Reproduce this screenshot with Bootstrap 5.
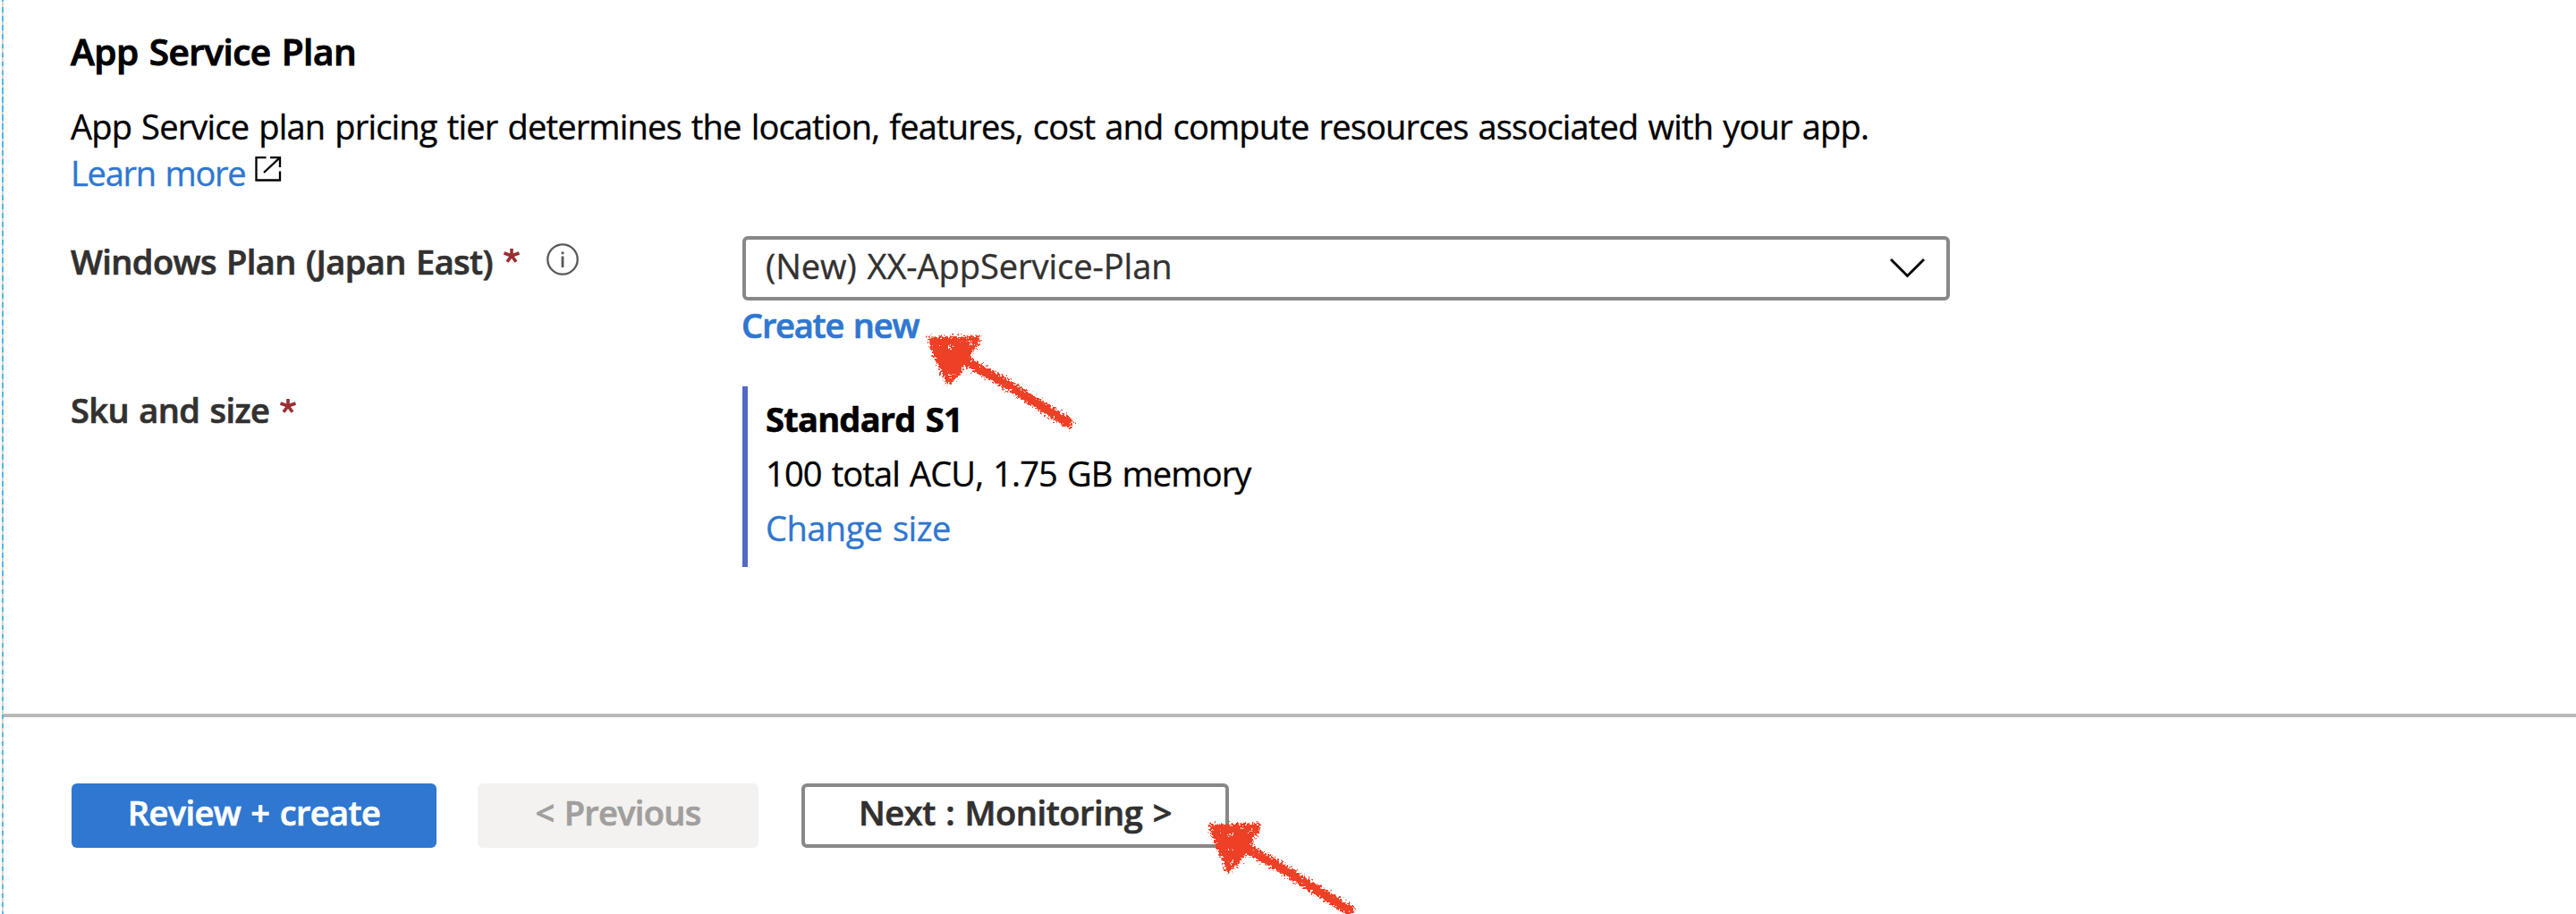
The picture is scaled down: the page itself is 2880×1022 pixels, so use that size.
<!DOCTYPE html>
<html lang="en">
<head>
<meta charset="utf-8">
<title>App Service Plan</title>
<link rel="stylesheet" href="https://cdn.jsdelivr.net/npm/bootstrap@5.3.0/dist/css/bootstrap.min.css">
<style>
body{font-family:"Open Sans","Noto Sans",sans-serif;font-size:38px;line-height:52px;color:#000;background:#fff;width:2880px;height:1022px;overflow:hidden;word-spacing:2px;-webkit-text-stroke:.35px currentColor}
.edge{width:2px;margin-left:2px;background:repeating-linear-gradient(to bottom,#d6d4d2 0 3.5px,#4fb9f0 3.5px 9.5px,#d6d4d2 9.5px 10px);background-position:0 5px}
.plan-body{height:798px;padding:28px 0 0 75px}
.plan-title{font-size:40.5px;line-height:60px;font-weight:600;letter-spacing:-.5px;margin-bottom:27px;-webkit-text-stroke:1px #000}
.plan-desc{letter-spacing:-.82px;margin-bottom:45px}
.lnk{color:#2f77d0;text-decoration:none}
.lnk-more{letter-spacing:-1.25px}
.lnk-new{letter-spacing:-1.2px;padding-top:1px;margin-left:-1px;font-weight:600}
.lbl{width:751px;font-weight:600;color:#323130;letter-spacing:-.6px}
.lbl,.lnk-new,.fbtn{-webkit-text-stroke:.7px currentColor}
.lbl svg,.plan-select svg,.plan-desc svg{flex-shrink:0}
.plan-select{width:1350px;height:72px;border:4px solid #8a8886;border-radius:6px;padding:0 23px 7px 22px;color:#323130;letter-spacing:-.03px}
.plan-fields{height:168px}
.plan-fields .lbl>span{padding-top:2px}
.ic-star{margin:12px 0 0 11px}
.ic-info{margin:7px 0 0 28px}
.ic-open{margin:8px 0 0 11px}
.ic-chev{margin-top:7px}
.sku{height:202px;border-left:6px solid #5269c5;padding:6px 0 0 20px;line-height:61px}
.sku-name{letter-spacing:-.75px;-webkit-text-stroke:.6px #000}
.sku-spec{letter-spacing:-.85px}
.sku-size{letter-spacing:-.5px}
.foot{height:224px;border-top:4px solid #b9b9b9;padding:74px 0 0 76px}
.fbtn{height:72px;border:4px solid transparent;border-radius:6px;font-size:38px;font-weight:600;line-height:56px;padding:0 0 8px;text-align:center;word-spacing:2px}
.b-review{width:408px;background:#2f77d0;color:#fff;letter-spacing:-.6px;margin-right:46px}
.b-prev{width:314px;background:#f3f2f1;color:#a19f9d;letter-spacing:-.7px;margin-right:48px}
.b-next{width:478px;border-color:#8a8886;color:#323130;background:#fff;letter-spacing:-.45px}
.marks{left:0;top:0;pointer-events:none}
</style>
<script src="https://cdn.jsdelivr.net/npm/bootstrap@5.3.0/dist/js/bootstrap.bundle.min.js"></script>
</head>
<body class="position-relative">
<div class="d-flex">
  <div class="edge flex-shrink-0"></div>
  <main class="flex-grow-1">
    <section class="plan-body">
      <h1 class="plan-title">App Service Plan</h1>
      <div class="plan-desc">
        <div>App Service plan pricing tier determines the location, features, cost and compute resources associated with your app.</div>
        <div class="d-flex"><a class="lnk lnk-more" href="#">Learn more</a>
          <svg class="ic-open" width="30" height="28" viewBox="0 0 30 28" fill="none" stroke="#000" stroke-width="2.3"><path d="M12.500 1.200H1.500V26.500H28V16.500M17 1.200H28V12M28 1.200L10 18"/></svg>
        </div>
      </div>
      <div class="d-flex plan-fields">
        <div class="lbl d-flex"><span>Windows Plan (Japan East)</span>
          <svg class="ic-star" width="20" height="20" viewBox="-10 -10 20 20" stroke="#9b2d30" stroke-width="3.600"><path d="M0 0V-8M0 0L-8.500-3M0 0L8.500-3M0 0L-5 6.800M0 0L5 6.800"/></svg>
          <svg class="ic-info" width="38" height="38" viewBox="-19 -19 38 38" fill="none" stroke="#5b5957" stroke-width="2.300"><circle r="16.700"/><path d="M0-3.500V9M0-8.500V-5.800" stroke-width="2.800"/></svg>
        </div>
        <div>
          <div class="plan-select d-flex align-items-center justify-content-between"><span>(New) XX-AppService-Plan</span>
            <svg class="ic-chev" width="40" height="24" viewBox="0 0 40 24" fill="none" stroke="#000" stroke-width="2.900"><path d="M1 2L19.500 20.500L38 2"/></svg>
          </div>
          <a class="lnk lnk-new d-block" href="#">Create new</a>
        </div>
      </div>
      <div class="d-flex">
        <div class="lbl d-flex"><span>Sku and size</span>
          <svg class="ic-star" width="20" height="20" viewBox="-10 -10 20 20" stroke="#9b2d30" stroke-width="3.600"><path d="M0 0V-8M0 0L-8.500-3M0 0L8.500-3M0 0L-5 6.800M0 0L5 6.800"/></svg>
        </div>
        <div class="sku">
          <div class="sku-name fw-bold">Standard S1</div>
          <div class="sku-spec">100 total ACU, 1.75 GB memory</div>
          <a class="lnk sku-size d-block" href="#">Change size</a>
        </div>
      </div>
    </section>
    <footer class="foot d-flex">
      <button class="fbtn b-review">Review + create</button>
      <button class="fbtn b-prev">&lt; Previous</button>
      <button class="fbtn b-next">Next : Monitoring &gt;</button>
    </footer>
  </main>
</div>
<svg class="marks position-absolute" width="2880" height="1022" viewBox="0 0 2880 1022">
  <defs>
    <filter id="chalk" x="-10%" y="-10%" width="120%" height="120%">
      <feTurbulence type="fractalNoise" baseFrequency=".4" numOctaves="3" seed="4" result="n"/>
      <feDisplacementMap in="SourceGraphic" in2="n" scale="12" xChannelSelector="R" yChannelSelector="G"/>
    </filter>
    <g id="arrow" fill="#ee4025" stroke="#ee4025" stroke-linejoin="round">
      <path stroke-width="3" d="M1039 378L1094 377L1092 386L1085 394L1084 403L1077 409L1071 419L1062 428L1058 428L1051 410L1045 398Z"/>
      <path fill="none" stroke-width="11" d="M1076 402L1113 422L1156 449L1198 475"/>
      <path fill="none" stroke="#fff" stroke-width="2.400" d="M1062 387v3M1085 381v5M1063 418l-1 4M1061 406v1M1073 382h1M1051 386h1"/>
    </g>
  </defs>
  <g filter="url(#chalk)"><use href="#arrow"/></g>
  <g filter="url(#chalk)"><use href="#arrow" x="314" y="545"/></g>
</svg>
</body>
</html>
